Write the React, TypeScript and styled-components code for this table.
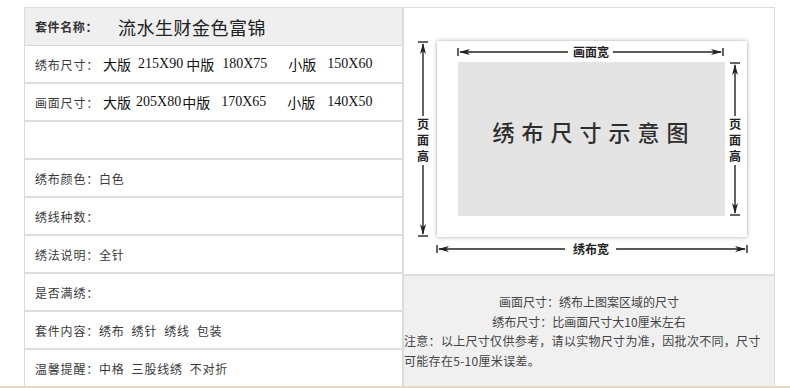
import React from 'react';
import styled, { createGlobalStyle } from 'styled-components';

const GlobalStyle = createGlobalStyle`
  html, body {
    margin: 0;
    padding: 0;
    background: #fff;
  }
  body {
    font-family: "Noto Sans CJK SC", "DejaVu Sans", sans-serif;
    color: #333;
  }
`;

type SizeItem = { text: string; gap: number; num?: boolean };

const bigSizes: SizeItem[] = [
  { text: '大版', gap: 4 },
  { text: '215X90', gap: 7, num: true },
  { text: '中版', gap: 3 },
  { text: '180X75', gap: 8, num: true },
  { text: '小版', gap: 21 },
  { text: '150X60', gap: 11, num: true },
];

const picSizes: SizeItem[] = [
  { text: '大版', gap: 4 },
  { text: '205X80', gap: 5, num: true },
  { text: '中版', gap: 1 },
  { text: '170X65', gap: 11, num: true },
  { text: '小版', gap: 21 },
  { text: '140X50', gap: 12, num: true },
];

const infoRows = [
  '',
  '绣布颜色：白色',
  '绣线种数：',
  '绣法说明：全针',
  '是否满绣：',
  '套件内容：绣布  绣针  绣线  包装',
  '温馨提醒：中格  三股线绣  不对折',
];

const SizeDiagram: React.FC = () => (
  <svg width="370" height="268" viewBox="0 0 370 268">
    <defs>
      <filter id="cardShadow" x="-10%" y="-10%" width="120%" height="120%">
        <feDropShadow dx="0" dy="0" stdDeviation="2.2" floodColor="#000" floodOpacity="0.35" />
      </filter>
    </defs>
    {/* 绣布 */}
    <rect x="33" y="33" width="310" height="196" fill="#fff" filter="url(#cardShadow)" />
    {/* 画面 */}
    <rect x="54" y="54" width="267" height="154" fill="#e4e4e4" />
    <text
      x="190"
      y="133"
      textAnchor="middle"
      fontSize="22"
      fontWeight="500"
      letterSpacing="7"
      fill="#2e2e2e"
      fontFamily='"Noto Sans CJK SC", sans-serif'
    >
      绣布尺寸示意图
    </text>

    <g stroke="#222" strokeWidth="1.4" fill="#222">
      {/* 画面宽 */}
      <line x1="54" y1="40" x2="54" y2="48" />
      <line x1="319" y1="40" x2="319" y2="48" />
      <line x1="56" y1="44" x2="164" y2="44" />
      <line x1="209" y1="44" x2="317" y2="44" />
      <polygon points="55,44 66,41 63,44 66,47" stroke="none" />
      <polygon points="318,44 307,41 310,44 307,47" stroke="none" />

      {/* 绣布宽 */}
      <line x1="33" y1="237" x2="33" y2="245" />
      <line x1="343" y1="237" x2="343" y2="245" />
      <line x1="35" y1="241" x2="161" y2="241" />
      <line x1="212" y1="241" x2="341" y2="241" />
      <polygon points="34,241 45,238 42,241 45,244" stroke="none" />
      <polygon points="342,241 331,238 334,241 331,244" stroke="none" />

      {/* 左 页面高 */}
      <line x1="14" y1="34" x2="24" y2="34" />
      <line x1="14" y1="228" x2="24" y2="228" />
      <line x1="19" y1="36" x2="19" y2="108" />
      <line x1="19" y1="157" x2="19" y2="226" />
      <polygon points="19,35 16,46 19,43 22,46" stroke="none" />
      <polygon points="19,227 16,216 19,219 22,216" stroke="none" />

      {/* 右 页面高 */}
      <line x1="326" y1="55" x2="336" y2="55" />
      <line x1="326" y1="207" x2="336" y2="207" />
      <line x1="331" y1="57" x2="331" y2="108" />
      <line x1="331" y1="157" x2="331" y2="205" />
      <polygon points="331,56 328,67 331,64 334,67" stroke="none" />
      <polygon points="331,206 328,195 331,198 334,195" stroke="none" />
    </g>

    <g fontSize="12" fontWeight="bold" fill="#222" textAnchor="middle" fontFamily='"Noto Sans CJK SC", sans-serif'>
      <text x="187" y="49">画面宽</text>
      <text x="187" y="246">绣布宽</text>
      <text x="19" y="121">页</text>
      <text x="19" y="137">面</text>
      <text x="19" y="153">高</text>
      <text x="331" y="121">页</text>
      <text x="331" y="137">面</text>
      <text x="331" y="153">高</text>
    </g>
  </svg>
);

const App: React.FC = () => {
  return (
    <Page>
      <GlobalStyle />
      <Table>
        <LeftColumn>
          <HeaderRow>
            <HeaderLabel>套件名称：</HeaderLabel>
            <KitName>流水生财金色富锦</KitName>
          </HeaderRow>

          <Row>
            <Label>绣布尺寸：</Label>
            {bigSizes.map((s, i) => (
              <Size key={i} $gap={s.gap} $num={s.num}>
                {s.text}
              </Size>
            ))}
          </Row>

          <Row>
            <Label>画面尺寸：</Label>
            {picSizes.map((s, i) => (
              <Size key={i} $gap={s.gap} $num={s.num}>
                {s.text}
              </Size>
            ))}
          </Row>

          {infoRows.map((text, i) => (
            <Row key={i} $last={i === infoRows.length - 1}>
              <Label>{text}</Label>
            </Row>
          ))}
        </LeftColumn>

        <RightColumn>
          <DiagramCell>
            <SizeDiagram />
          </DiagramCell>
          <NoteCell>
            <CenterLine>画面尺寸：绣布上图案区域的尺寸</CenterLine>
            <CenterLine>绣布尺寸：比画面尺寸大10厘米左右</CenterLine>
            <NoteText>
              注意：以上尺寸仅供参考，请以实物尺寸为准，因批次不同，尺寸
              <br />
              可能存在5-10厘米误差。
            </NoteText>
          </NoteCell>
        </RightColumn>
      </Table>
      <BottomBar />
    </Page>
  );
};

const Page = styled.div`
  width: 790px;
  height: 388px;
  padding-top: 7px;
  box-sizing: border-box;
  display: flex;
  flex-direction: column;
  overflow: hidden;
`;

const Table = styled.div`
  margin-left: 24px;
  width: 751px;
  height: 379px;
  box-sizing: border-box;
  border: 1px solid #dcdcdc;
  border-bottom: none;
  display: grid;
  grid-template-columns: 379px 1fr;
`;

const LeftColumn = styled.div`
  display: flex;
  flex-direction: column;
  border-right: 2px solid #dcdcdc;
`;

const HeaderRow = styled.div`
  height: 38px;
  flex-shrink: 0;
  box-sizing: border-box;
  background: #efefef;
  border-bottom: 1px solid #d8d8d8;
  display: flex;
  align-items: center;
  padding-left: 10px;
`;

const HeaderLabel = styled.span`
  font-size: 12px;
  font-weight: bold;
  color: #333;
  letter-spacing: 0.6px;
`;

const KitName = styled.span`
  margin-left: 20px;
  font-size: 18px;
  color: #222;
  letter-spacing: 0.5px;
`;

const Row = styled.div<{ $last?: boolean }>`
  height: ${(p) => (p.$last ? 36 : 38)}px;
  flex-shrink: 0;
  box-sizing: border-box;
  border-bottom: ${(p) => (p.$last ? 'none' : '2px solid #dedede')};
  display: flex;
  align-items: center;
  padding-left: 10px;
  white-space: pre;
`;

const Label = styled.span`
  font-size: 12px;
  color: #3a3a3a;
  letter-spacing: 0.8px;
`;

const Size = styled.span<{ $gap: number; $num?: boolean }>`
  margin-left: ${(p) => p.$gap}px;
  font-size: 14px;
  font-family: ${(p) =>
    p.$num ? '"Liberation Serif", serif' : '"Noto Sans CJK SC", sans-serif'};
  color: #111;
`;

const RightColumn = styled.div`
  display: flex;
  flex-direction: column;
`;

const DiagramCell = styled.div`
  height: 268px;
  flex-shrink: 0;
  box-sizing: border-box;
  border-bottom: 2px solid #dedede;
  background: #fff;
`;

const NoteCell = styled.div`
  flex: 1;
  background: #f0f0f0;
  display: flex;
  flex-direction: column;
  justify-content: center;
  font-size: 12px;
  line-height: 19.5px;
  color: #444;
`;

const CenterLine = styled.div`
  text-align: center;
`;

const NoteText = styled.div`
  text-align: left;
  white-space: nowrap;
  letter-spacing: 0.3px;
`;

const BottomBar = styled.div`
  height: 2px;
  background: #e7dcc2;
`;

export default App;
